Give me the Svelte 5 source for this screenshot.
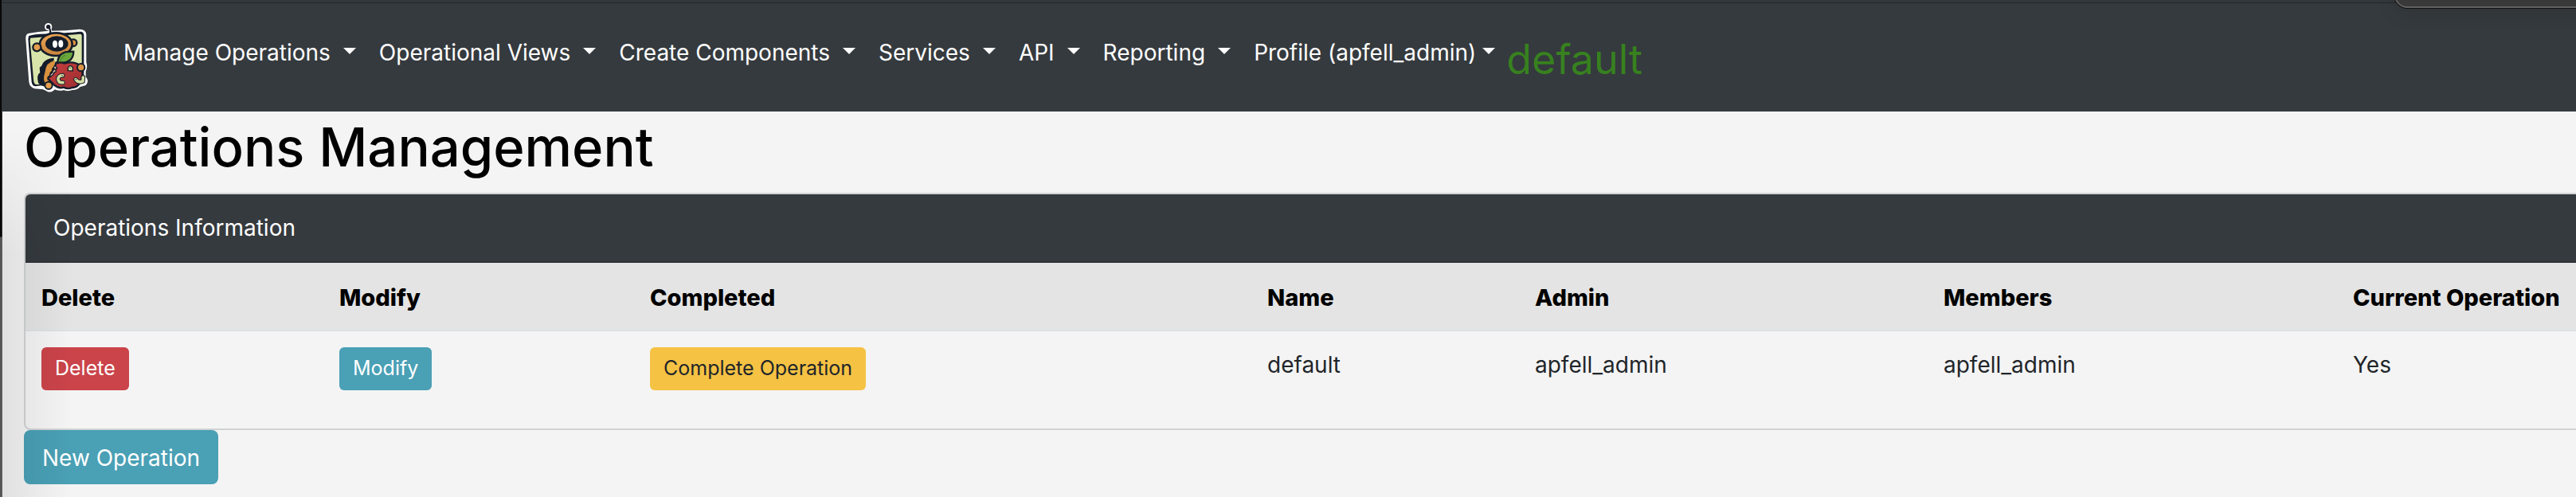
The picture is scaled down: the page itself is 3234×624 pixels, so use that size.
<script>
  const menus = [
    'Manage Operations',
    'Operational Views',
    'Create Components',
    'Services',
    'API',
    'Reporting',
    'Profile (apfell_admin)',
  ];
  const columns = ['Delete', 'Modify', 'Completed', 'Name', 'Admin', 'Members', 'Current Operation'];
  const widths = [374, 390, 775, 336, 513, 514, 300];
  const total = widths.reduce((a, b) => a + b, 0);
  const operations = [{ name: 'default', admin: 'apfell_admin', members: 'apfell_admin', current: 'Yes' }];
</script>

<div class="page">
  <header class="navbar">
    <a class="brand" href="#home" aria-label="Home">
      <svg viewBox="90 84 246 270" aria-hidden="true">
        <defs>
          <linearGradient id="apple" x1="0" y1="0" x2="1" y2="1">
            <stop offset="0" stop-color="#c8413f" />
            <stop offset="1" stop-color="#9c2c30" />
          </linearGradient>
          <linearGradient id="head" x1="0" y1="0" x2="0" y2="1">
            <stop offset="0" stop-color="#eba655" />
            <stop offset="1" stop-color="#c9843c" />
          </linearGradient>
        </defs>
        <g fill="#fff" stroke="#fff" stroke-width="10" stroke-linejoin="round">
          <path d="M107 131 Q145 124 186 121 Q191 112 187 106 L182 101 L187 106 L192 121 Q250 121 300 115 Q319 115 320 131 L320 236 Q326 252 318 268 L318 292 Q332 303 320 317 Q309 320 299 323 Q290 334 272 334 Q255 341 239 334 Q222 340 205 331 Q195 345 180 340 L165 332 L131 329 Q116 325 114 308 L102 147 Q101 134 107 131Z" />
          <circle cx="182" cy="101" r="9" />
        </g>
        <path d="M108 136 Q112 131 150 128 Q250 125 301 119 Q316 118 316 133 L316 300 L135 325 Q121 325 119 308 L106 148Z" fill="#151d2b" />
        <path d="M115 143 L303 128 Q308 128 308 136 L308 300 L140 319 Q129 319 127 306 L113 153Z" fill="#d9e4aa" />
        <circle cx="182" cy="101" r="8" fill="#151d2b" />
        <path d="M184 103 Q191 112 190 127" fill="none" stroke="#151d2b" stroke-width="6" />
        <path d="M203 222 Q157 224 156 274 Q140 284 148 311 Q160 325 184 320" fill="#151d2b" stroke="#151d2b" stroke-width="8" />
        <path d="M207 228 Q173 234 170 270 Q160 300 171 314 L205 300Z" fill="#d9913f" />
        <path d="M149 255 Q154 247 163 250 L170 262 L162 283 L151 275Z" fill="#151d2b" />
        <circle cx="276" cy="161" r="13" fill="#d9913f" stroke="#151d2b" stroke-width="7" />
        <ellipse cx="211" cy="167" rx="61" ry="43" fill="url(#head)" stroke="#151d2b" stroke-width="8" />
        <circle cx="139" cy="178" r="15" fill="#e39d4c" stroke="#151d2b" stroke-width="7" />
        <ellipse cx="214" cy="165" rx="43" ry="29" fill="#151d2b" />
        <ellipse cx="207" cy="166" rx="9" ry="14" fill="#fff" />
        <ellipse cx="229" cy="165" rx="9" ry="14" fill="#fff" />
        <path d="M211 236 Q225 230 242 239 Q280 228 303 248 Q320 277 300 314 Q289 331 271 330 Q256 337 240 329 Q222 336 204 320 Q190 304 182 299 Q178 291 190 285 Q188 274 199 269 Q196 257 207 253Z" fill="url(#apple)" stroke="#151d2b" stroke-width="7" stroke-linejoin="round" />
        <path d="M207 246 Q198 257 206 260 Q196 266 197 274 Q186 279 188 291 Q196 283 201 281 Q201 273 211 269 Q207 262 215 257Z" fill="#efcfaf" stroke="#151d2b" stroke-width="4" />
        <path d="M217 238 Q216 207 245 196 L277 194 Q276 233 236 236 Q226 234 217 238Z" fill="#69a63b" stroke="#151d2b" stroke-width="7" stroke-linejoin="round" />
        <path d="M222 234 Q231 215 247 207" fill="none" stroke="#477a32" stroke-width="3" />
        <path d="M236 284 Q218 285 219 299 Q221 313 237 311" fill="none" stroke="#151d2b" stroke-width="17" stroke-linecap="round" />
        <path d="M236 284 Q218 285 219 299 Q221 313 237 311" fill="none" stroke="#d4dda0" stroke-width="11" stroke-linecap="round" />
        <path d="M285 299 Q293 313 312 306 L313 291" fill="none" stroke="#151d2b" stroke-width="17" stroke-linecap="round" />
        <path d="M285 299 Q293 313 312 306 L313 291" fill="none" stroke="#d4dda0" stroke-width="11" stroke-linecap="round" />
        <path d="M256 266 V255 Q264 241 274 254 V267Z" fill="#d4dda0" stroke="#151d2b" stroke-width="4" />
        <circle cx="264" cy="256" r="2" fill="#151d2b" />
        <circle cx="234" cy="284" r="2" fill="#151d2b" />
        <circle cx="286" cy="299" r="2" fill="#151d2b" />
        <circle cx="305" cy="254" r="14" fill="#dc9548" stroke="#151d2b" stroke-width="6" />
        <circle cx="183" cy="322" r="14" fill="#e39d4c" stroke="#151d2b" stroke-width="6" />
      </svg>
    </a>
    <nav class="menus">
      {#each menus as menu}
        <button class="menu" class:profile={menu.startsWith('Profile')} type="button">{menu}<span class="caret"></span></button>
      {/each}
    </nav>
    <span class="current">default</span>
  </header>

  <main>
    <h1>Operations Management</h1>
    <section class="card">
      <div class="card-header">Operations Information</div>
      <table>
        <colgroup>
          {#each widths as w}<col style="width: {(w / total) * 100}%" />{/each}
        </colgroup>
        <thead>
          <tr>{#each columns as c}<th scope="col">{c}</th>{/each}</tr>
        </thead>
        <tbody>
          {#each operations as op}
            <tr>
              <td><button class="btn small danger" type="button">Delete</button></td>
              <td><button class="btn small info" type="button">Modify</button></td>
              <td><button class="btn small warning" type="button">Complete Operation</button></td>
              <td>{op.name}</td>
              <td>{op.admin}</td>
              <td>{op.members}</td>
              <td>{op.current}</td>
            </tr>
          {/each}
        </tbody>
      </table>
    </section>
    <button class="btn info" type="button">New Operation</button>
  </main>

  <div class="panel"></div>
  <div class="shade"></div>
  <div class="edge"></div>
</div>

<style>
  :global(body) {
    background: #f4f4f4;
  }
  .page {
    position: relative;
    min-height: 100vh;
    overflow: hidden;
    font: 400 28px/44px Inter, sans-serif;
    color: #212529;
  }
  .navbar {
    display: flex;
    align-items: flex-start;
    box-sizing: border-box;
    height: 140px;
    padding: 28px 30px 0;
    background: linear-gradient(#33383c 3px, #24282b 3px, #24282b 4px, #353a3e 4px);
  }
  .brand svg {
    display: block;
    width: 82px;
    height: 90px;
  }
  .menus {
    display: flex;
    gap: 29px;
    margin: 16px 14px 0 43px;
  }
  .menu {
    display: flex;
    align-items: center;
    gap: 16px;
    padding: 0;
    border: 0;
    background: none;
    color: #fff;
    font: inherit;
    white-space: nowrap;
  }
  .profile {
    gap: 8px;
  }
  .caret {
    margin-bottom: 4px;
    border: 8px solid transparent;
    border-top-color: #fff;
    border-bottom: 0;
  }
  .current {
    margin-top: 15px;
    color: #37811f;
    font-size: 52px;
    line-height: 64px;
  }
  main {
    padding: 0 0 16px 30px;
  }
  h1 {
    margin: 0;
    padding: 2px 0 14px;
    color: #000;
    font-size: 67px;
    font-weight: 500;
    line-height: 86px;
  }
  .card {
    border: 2px solid #d0d2d3;
    border-right: 0;
    border-radius: 8px 0 0 8px;
    overflow: hidden;
  }
  .card-header {
    padding: 20px 35px;
    border-bottom: 2px solid #2f3338;
    background: #353a3e;
    color: #fff;
  }
  table {
    width: 100%;
    border-collapse: collapse;
    table-layout: fixed;
  }
  th,
  td {
    padding: 20px;
    text-align: left;
    vertical-align: top;
    white-space: nowrap;
  }
  th {
    padding: 22px 20px 18px;
    border-bottom: 2px solid #dee2e6;
    background: #e4e4e4;
    color: #000;
    font-weight: 800;
    font-size: 29px;
  }
  td {
    height: 82px;
  }
  .btn {
    display: block;
    padding: 13px 23px 11px;
    border: 0;
    border-radius: 8px;
    color: #fff;
    font: inherit;
  }
  .small {
    padding: 5px 17px 7px;
    border-radius: 6px;
    font-size: 25px;
    line-height: 42px;
  }
  .danger {
    background: #ca444a;
  }
  .info {
    background: #4aa0b5;
  }
  .warning {
    background: #f5c244;
    color: #212529;
  }
  .panel {
    position: absolute;
    top: -30px;
    right: -30px;
    width: 254px;
    height: 36px;
    border: 2px solid #606060;
    border-radius: 16px;
    background: #393939;
    box-shadow: 0 0 0 1px #111, 0 6px 24px rgba(0, 0, 0, 0.12);
  }
  .shade {
    position: absolute;
    inset: 160px auto 0 0;
    width: 90px;
    background: linear-gradient(90deg, rgba(0, 0, 0, 0.08), transparent);
    mask-image: linear-gradient(transparent, #000 160px);
    pointer-events: none;
  }
  .edge {
    position: absolute;
    inset: 0 auto 0 0;
    width: 2px;
    background: linear-gradient(#080808 297px, #555 298px);
    border-right: 1px solid #77777a66;
  }
</style>
